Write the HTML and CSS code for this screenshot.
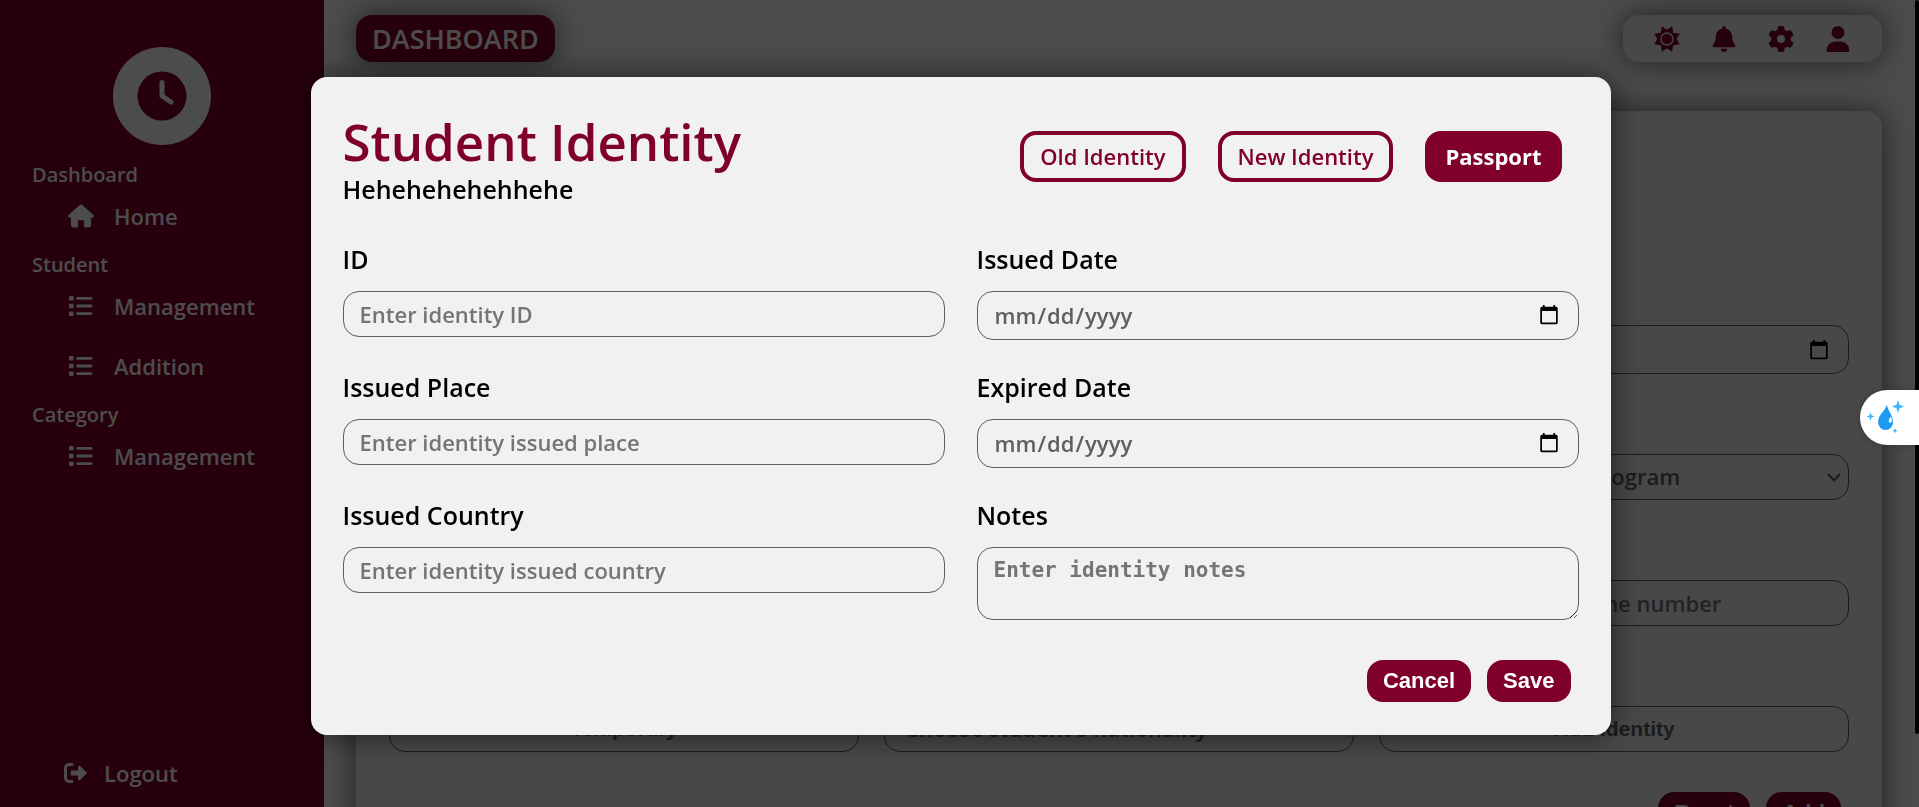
FILE: index.html
```html
<!DOCTYPE html>
<html lang="en-US">
<head>
<meta charset="utf-8">
<title>Dashboard</title>
<link rel="stylesheet" href="styles.css">
</head>
<body>
<svg width="0" height="0" class="sprite" aria-hidden="true">
  <symbol id="list" viewBox="0 0 24 20">
    <rect x="0" y="0" width="4.6" height="4.6" rx="1"/><rect x="0" y="7.7" width="4.6" height="4.6" rx="1"/><rect x="0" y="15.4" width="4.6" height="4.6" rx="1"/>
    <rect x="7" y="1" width="16.5" height="2.8" rx="1.4"/><rect x="7" y="8.6" width="16.5" height="2.8" rx="1.4"/><rect x="7" y="16.2" width="16.5" height="2.8" rx="1.4"/>
  </symbol>
</svg>
<div class="layout">
  <nav class="sidebar">
    <div class="logo">
      <svg width="50" height="50" viewBox="0 0 50 50"><circle class="logo-face" cx="25" cy="25" r="24.5"/><path class="logo-hands" d="M25 11.500V25L34 31"/></svg>
    </div>
    <h2 class="group">Dashboard</h2>
    <a class="item" href="#"><svg width="26" height="24" viewBox="0 0 576 512"><path d="M575.800 255.500c0 18-15 32.100-32 32.100h-32l.7 160.200c.2 35.500-28.500 64.300-64 64.300H392c-22 0-40-17.900-40-40V352H224v120c0 22.100-18 40-40 40h-56c-36 0-64-28.700-64-64V287.600H32c-18 0-32-14-32-32.100 0-9 3-17 10-24L266.400 8c7-7 15-8 22-8s15 2 21 7l255.400 224.500c8 7 12 15 11 24z"/></svg>Home</a>
    <h2 class="group">Student</h2>
    <a class="item" href="#"><svg width="26" height="20"><use href="#list"/></svg>Management</a>
    <a class="item item-next" href="#"><svg width="26" height="20"><use href="#list"/></svg>Addition</a>
    <h2 class="group">Category</h2>
    <a class="item" href="#"><svg width="26" height="20"><use href="#list"/></svg>Management</a>
    <a class="logout" href="#"><svg width="24" height="22" viewBox="0 0 24 22"><path class="bracket" d="M8 2.500H5A3.500 3.500 0 0 0 1.500 6v10A3.500 3.500 0 0 0 5 19.500h3"/><path d="M8 8.500h6V5.200c0-1.400 1.300-2 2.300-1l6.200 6c.6.500.6 1.100 0 1.600l-6.200 6c-1 1-2.300.4-2.300-1v-3.300H8c-.8 0-1.300-.5-1.300-1.300V9.800c0-.8.5-1.300 1.300-1.300z"/></svg>Logout</a>
  </nav>
  <main class="main">
    <header class="topbar">
      <h1 class="page-title">DASHBOARD</h1>
      <div class="tools">
        <button aria-label="Theme"><svg width="26" height="26" viewBox="0 0 26 26"><path fill-rule="evenodd" d="M18.200.3 19.200 6.800 25.700 7.800 22.600 13 25.700 18.200 19.200 19.200 18.200 25.700 13 22.300 7.800 25.700 6.800 19.200.3 18.200 3.400 13 .3 7.800 6.800 6.800 7.800.3 13 3.700zM13 6.300a6.700 6.700 0 1 0 0 13.400 6.700 6.700 0 1 0 0-13.400zM13 7.700a5.300 5.300 0 1 1 0 10.600 5.300 5.300 0 1 1 0-10.600z"/></svg></button>
        <button aria-label="Notifications"><svg width="26" height="26" viewBox="-32 0 512 512"><path d="M224 0c-17.700 0-32 14.300-32 32v19.200C119 66 64 130.600 64 208v18.800c0 47-17.300 92.400-48.500 127.600l-7.400 8.300c-8.400 9.400-10.400 22.900-5.300 34.400S19.400 416 32 416h384c12.600 0 24-7.400 29.200-18.900s3.100-25-5.300-34.400l-7.400-8.300C401.300 319.200 384 273.900 384 226.800V208c0-77.400-55-142-128-156.800V32c0-17.700-14.300-32-32-32zm45.300 493.300c12-12 18.700-28.300 18.700-45.300H160c0 17 6.700 33.300 18.700 45.300S207 512 224 512s33.300-6.700 45.300-18.700z"/></svg></button>
        <button aria-label="Settings"><svg width="26" height="26" viewBox="0 0 512 512"><path fill-rule="evenodd" d="M495.900 166.600c3.200 8.700.5 18.400-6.400 24.600l-43.300 39.400c1.100 8.300 1.700 16.800 1.700 25.400s-.6 17.100-1.700 25.400l43.300 39.400c6.900 6.200 9.600 15.900 6.400 24.600-4.400 11.900-9.700 23.300-15.800 34.300l-4.700 8.100c-6.600 11-14 21.400-22.100 31.200-5.900 7.200-15.700 9.600-24.500 6.800l-55.700-17.700c-13.400 10.300-28.200 18.900-44 25.400l-12.500 57.100c-2 9.100-9 16.300-18.200 17.800-13.800 2.300-28 3.500-42.500 3.500s-28.700-1.200-42.500-3.500c-9.200-1.500-16.200-8.700-18.200-17.800l-12.500-57.100c-15.800-6.500-30.600-15.100-44-25.400l-55.600 17.800c-8.800 2.800-18.600.3-24.500-6.800-8.100-9.800-15.500-20.200-22.100-31.200l-4.700-8.100c-6.100-11-11.400-22.400-15.800-34.300-3.200-8.700-.5-18.400 6.400-24.600l43.300-39.400C64.600 273.100 64 264.600 64 256s.6-17.100 1.700-25.400l-43.300-39.400c-6.900-6.200-9.600-15.900-6.400-24.600 4.400-11.900 9.700-23.300 15.800-34.300l4.700-8.100c6.600-11 14-21.400 22.100-31.200 5.900-7.200 15.700-9.600 24.500-6.800l55.700 17.700c13.400-10.300 28.200-18.900 44-25.400l12.500-57.100c2-9.100 9-16.300 18.200-17.800C227.300 1.200 241.500 0 256 0s28.700 1.200 42.500 3.500c9.200 1.500 16.200 8.700 18.200 17.800l12.500 57.100c15.800 6.500 30.600 15.100 44 25.400l55.700-17.700c8.800-2.800 18.600-.3 24.500 6.800 8.100 9.800 15.500 20.200 22.100 31.200l4.700 8.100c6.100 11 11.400 22.400 15.800 34.300zM256 336a80 80 0 1 0 0-160 80 80 0 1 0 0 160z"/></svg></button>
        <button aria-label="Account"><svg width="26" height="26" viewBox="-32 0 512 512"><path d="M224 256a128 128 0 1 0 0-256 128 128 0 1 0 0 256zm-45.700 48C79.800 304 0 383.800 0 482.300 0 498.700 13.300 512 29.700 512h388.600c16.400 0 29.700-13.300 29.700-29.700C448 383.800 368.200 304 269.700 304h-91.400z"/></svg></button>
      </div>
    </header>
    <form class="card">
      <div class="student-fields">
        <input class="field last-column" type="date" aria-label="Date">
        <div class="select last-column">
          <select class="field" aria-label="Program"><option>Choose student's program</option></select>
          <svg class="chevron" width="14" height="10" viewBox="0 0 14 10"><path d="M1.500 1.500 7 7.500l5.500-6"/></svg>
        </div>
        <input class="field last-column" type="text" placeholder="Enter student's phone number" aria-label="Phone number">
        <button class="field picker" type="button">Temporary</button>
        <div class="select">
          <select class="field" aria-label="Nationality"><option>Choose student's nationality</option></select>
          <svg class="chevron" width="14" height="10" viewBox="0 0 14 10"><path d="M1.500 1.500 7 7.500l5.500-6"/></svg>
        </div>
        <button class="field picker" type="button">Add identity</button>
      </div>
      <div class="actions">
        <button class="action" type="reset">Reset</button>
        <button class="action" type="button">Add</button>
      </div>
    </form>
  </main>
</div>
<div class="overlay">
  <section class="modal" role="dialog" aria-labelledby="modal-title">
    <header class="modal-head">
      <div>
        <h2 class="modal-title" id="modal-title">Student Identity</h2>
        <p class="modal-sub">Hehehehehehhehe</p>
      </div>
      <div class="tabs">
        <button class="tab">Old Identity</button>
        <button class="tab">New Identity</button>
        <button class="tab tab-active">Passport</button>
      </div>
    </header>
    <form>
      <div class="fields">
        <div class="group-field"><label for="id">ID</label><input class="field" id="id" type="text" placeholder="Enter identity ID"></div>
        <div class="group-field"><label for="issued">Issued Date</label><input class="field" id="issued" type="date"></div>
        <div class="group-field"><label for="place">Issued Place</label><input class="field" id="place" type="text" placeholder="Enter identity issued place"></div>
        <div class="group-field"><label for="expired">Expired Date</label><input class="field" id="expired" type="date"></div>
        <div class="group-field"><label for="country">Issued Country</label><input class="field" id="country" type="text" placeholder="Enter identity issued country"></div>
        <div class="group-field"><label for="notes">Notes</label><textarea class="field notes" id="notes" rows="2" placeholder="Enter identity notes"></textarea></div>
      </div>
      <div class="actions">
        <button class="action" type="button">Cancel</button>
        <button class="action" type="button">Save</button>
      </div>
    </form>
  </section>
</div>
<div class="scroll-thumb"></div>
<button class="widget" aria-label="Assistant">
  <svg width="40" height="36" viewBox="0 0 40 36"><path class="drop" fill-rule="evenodd" d="M21 5c1 6 6 10 6 17.500a7.400 7.400 0 0 1-14.900 0C12 15 18 12 21 5zM24.500 17c-2 2-2.400 5.500-.3 5.700 2.300.1 2.300-3.500.3-5.700z"/><path class="spark" d="M32 0l1.500 4.700L38 6.500l-4.500 1.700L32 13l-1.500-4.800L26 6.500l4.500-1.800zM4.500 12l1 3.200 3.200 1.200-3.200 1.200-1 3.200-1-3.200L.5 16.400l3-1.200zM29 28l.8 2 2 .8-2 .8-.8 2-.8-2-2-.8 2-.8z"/></svg>
</button>
</body>
</html>
```
FILE: styles.css
```css
* {
  box-sizing: border-box;
}

body {
  margin: 0;
  overflow: hidden;
  background: #fff;
  color: #000;
  font: 600 22px/32px "Open Sans", "Noto Sans", sans-serif;
}

h1,
h2,
p {
  margin: 0;
}

button {
  border: 0;
  background: none;
  font: inherit;
  cursor: pointer;
}

a {
  color: inherit;
  text-decoration: none;
}

svg {
  display: block;
  fill: currentColor;
}

.sprite {
  position: absolute;
}

.layout {
  display: flex;
  height: 100vh;
  overflow: hidden;
}

.sidebar {
  display: flex;
  flex-direction: column;
  flex: none;
  width: 324px;
  padding: 47px 32px 18px;
  background: #7f0028;
  color: #fff;
}

.logo {
  display: grid;
  place-items: center;
  align-self: center;
  width: 98px;
  height: 98px;
  margin-bottom: 14px;
  border-radius: 50%;
  background: #fff;
}

.logo-face {
  fill: #7f0028;
}

.logo-hands {
  fill: none;
  stroke: #fff;
  stroke-width: 5;
  stroke-linecap: round;
  stroke-linejoin: round;
}

.group {
  font-size: 20px;
  font-weight: 600;
  line-height: 32px;
}

.item {
  display: flex;
  align-items: center;
  gap: 20px;
  height: 58px;
  padding: 0 0 8px 36px;
}

.item-next {
  margin-top: 2px;
}

.logout {
  display: flex;
  align-items: center;
  gap: 16px;
  margin-top: auto;
  padding-left: 32px;
}

.bracket {
  fill: none;
  stroke: currentColor;
  stroke-width: 3;
  stroke-linecap: round;
}

.main {
  flex: 1;
  min-width: 0;
  overflow: hidden;
  padding: 15px 37px 0 32px;
}

.topbar {
  display: flex;
  justify-content: space-between;
  margin-bottom: 49px;
}

.page-title {
  padding: 8px 16px;
  border-radius: 16px;
  background: #7f0028;
  box-shadow: 0 0 32px rgba(0, 0, 0, 0.6);
  color: #fff;
  font-size: 27px;
  font-weight: 600;
  line-height: 31px;
}

.tools {
  display: flex;
  align-items: center;
  gap: 31px;
  padding: 0 31px;
  border-radius: 16px;
  background: #f1f1f1;
  box-shadow: 0 0 32px rgba(0, 0, 0, 0.6);
  color: #7f0028;
}

.tools button {
  padding: 0;
  color: inherit;
}

.card {
  height: 100%;
  padding: 214px 33px 0;
  border-radius: 16px;
  background: #f1f1f1;
  box-shadow: 0 0 32px rgba(0, 0, 0, 0.6);
}

.student-fields {
  display: grid;
  grid-template-columns: repeat(3, 1fr);
  align-items: start;
  gap: 80px 25px;
}

.last-column {
  grid-column: 3;
}

.field {
  display: block;
  width: 100%;
  height: 46px;
  padding: 8px 16px;
  border: 1px solid #5f5f5f;
  border-radius: 16px;
  background: transparent;
  color: #5f5f5f;
  font: 600 22px/28px "Open Sans", "Noto Sans", sans-serif;
}

.field::placeholder {
  color: #757575;
}

.field[type="date"] {
  height: 49px;
}

.select {
  position: relative;
}

.select .field {
  padding: 6px 32px 8px 20px;
  appearance: none;
}

.chevron {
  position: absolute;
  top: 19px;
  right: 8px;
  fill: none;
  stroke: #5f5f5f;
  stroke-width: 2;
  stroke-linecap: round;
  pointer-events: none;
}

.picker {
  font-family: "Liberation Sans", sans-serif;
  font-size: 21px;
  font-weight: 700;
}

.notes {
  height: 73px;
  font-family: "DejaVu Sans Mono", "Liberation Mono", monospace;
  font-size: 21px;
}

.actions {
  display: flex;
  justify-content: flex-end;
  gap: 16px;
  margin-top: 40px;
  padding-right: 8px;
}

.action {
  padding: 8px 16px;
  border-radius: 16px;
  background: #7f0028;
  color: #fff;
  font: 700 22px/26px "Liberation Sans", Arial, sans-serif;
}

.overlay {
  position: fixed;
  inset: 0;
  display: flex;
  align-items: center;
  justify-content: center;
  padding: 4px 0 0 2px;
  background: rgba(0, 0, 0, 0.7);
}

.modal {
  width: 100%;
  max-width: 1300px;
  padding: 32px 32px 33px;
  border-radius: 16px;
  background: #f1f1f1;
  box-shadow: 0 0 32px rgba(0, 0, 0, 0.6);
}

.modal-head {
  display: flex;
  align-items: center;
  justify-content: space-between;
  margin-bottom: 38px;
}

.modal-title {
  color: #7f0028;
  font-size: 51px;
  font-weight: 600;
  line-height: 64px;
}

.modal-sub,
.group-field label {
  font-size: 25px;
}

.tabs {
  display: flex;
  gap: 32px;
  padding-right: 17px;
}

.tab {
  padding: 8px 16px;
  border: 4px solid #7f0028;
  border-radius: 16px;
  color: #7f0028;
  line-height: 27px;
}

.tab-active {
  background: #7f0028;
  color: #fff;
  font-weight: 700;
}

.fields {
  display: grid;
  grid-template-columns: 1fr 1fr;
  gap: 31px 32px;
}

.group-field {
  display: flex;
  flex-direction: column;
  gap: 16px;
}

.scroll-thumb {
  position: fixed;
  top: 0;
  right: 0;
  width: 4px;
  height: 91vh;
  border-radius: 4px;
  background: #000;
}

.widget {
  position: fixed;
  top: 390px;
  right: 0;
  padding: 10px 13px 9px 6px;
  border-radius: 28px 0 0 28px;
  background: #fff;
  box-shadow: 0 0 12px rgba(0, 0, 0, 0.2);
}

.drop {
  fill: #1c9bf0;
}

.spark {
  fill: #3fb4fa;
}
```
